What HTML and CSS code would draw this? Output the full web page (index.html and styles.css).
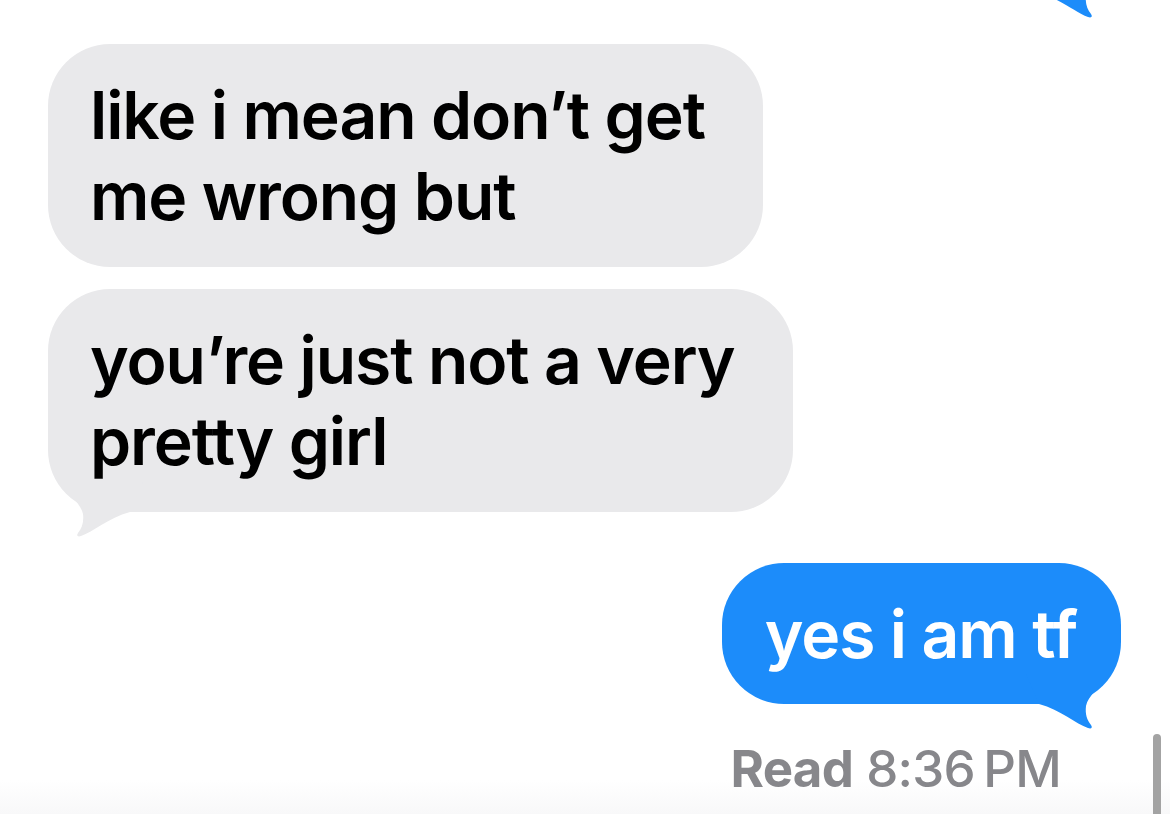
FILE: index.html
```html
<!DOCTYPE html>
<html lang="en">
<head>
  <meta charset="UTF-8" />
  <meta name="viewport" content="width=device-width, initial-scale=1.0"/>
  <title>Messages</title>
  <link rel="stylesheet" href="styles.css">
</head>
<body>
  <div class="thread">

    <!-- previous sent message, scrolled mostly out of view -->
    <div class="msg sent tail prev">
      <div class="bubble"></div>
      <svg class="tail-shape" viewBox="-100 -40 100 70" aria-hidden="true">
        <path d="M-12 -30 C-22 -16 -33 -8 -35 2 C-36 10 -34 16 -30 21 C-28 24 -30 25 -33 24 C-45 20 -60 6 -82 0 L-95 -30 Z"/>
      </svg>
    </div>

    <div class="msg received group-start">
      <div class="bubble">like i mean don’t get<br>me wrong but</div>
    </div>

    <div class="msg received tail">
      <div class="bubble">you’re just not a very<br>pretty girl</div>
      <svg class="tail-shape" viewBox="0 -40 100 70" aria-hidden="true">
        <path d="M12 -30 C22 -16 33 -8 35 2 C36 10 34 16 30 21 C28 24 30 25 33 24 C45 20 60 6 82 0 L95 -30 Z"/>
      </svg>
    </div>

    <div class="msg sent tail group-start">
      <div class="bubble">yes i am tf</div>
      <svg class="tail-shape" viewBox="-100 -40 100 70" aria-hidden="true">
        <path d="M-12 -30 C-22 -16 -33 -8 -35 2 C-36 10 -34 16 -30 21 C-28 24 -30 25 -33 24 C-45 20 -60 6 -82 0 L-95 -30 Z"/>
      </svg>
    </div>

    <div class="receipt"><b>Read</b> 8:36&#8239;PM</div>
  </div>

  <div class="scrollbar"></div>
</body>
</html>
```

FILE: styles.css
```css
body {
  margin: 0;
  height: 814px;
  overflow: hidden;
  font-family: Inter, 'Noto Sans', sans-serif;
  font-feature-settings: "liga" 0, "calt" 0;
  background: linear-gradient(to bottom, #fff 0, #fff 780px, #f8f8f9 814px);
  position: relative;
}

.thread {
  display: flex;
  flex-direction: column;
  padding: 0 49px 0 48px;
}

.msg {
  position: relative;
  display: flex;
  margin-top: 22px;
}

.msg.group-start {
  margin-top: 51px;
}

.msg.prev {
  margin-top: -148px;
}

.msg.received {
  justify-content: flex-start;
}

.msg.sent {
  justify-content: flex-end;
}

.bubble {
  font-size: 66px;
  font-weight: 600;
  line-height: 81px;
  letter-spacing: -1.1px;
  border-radius: 62px;
  padding: 31px 58px 30px 42px;
}

.received .bubble {
  background: #e9e9eb;
  color: #000;
}

.sent .bubble {
  background: #1c8cfa;
  color: #fff;
  padding: 31px 44px 29px 43px;
}

.prev .bubble {
  width: 300px;
  height: 81px;
}

/* the curled tail under the last bubble of a group */
.tail-shape {
  position: absolute;
  bottom: -30px;
  width: 100px;
  height: 70px;
}

.received .tail-shape {
  left: 0;
  fill: #e9e9eb;
}

.sent .tail-shape {
  right: 0;
  fill: #1c8cfa;
}

.receipt {
  align-self: flex-end;
  margin-top: 34px;
  margin-right: 60px;
  font-size: 51px;
  font-weight: 500;
  color: #87878b;
  letter-spacing: -0.7px;
}

.receipt b {
  font-weight: 700;
}

.scrollbar {
  position: absolute;
  right: 9px;
  top: 734px;
  bottom: 0;
  width: 8px;
  background: #a3a3a3;
  border-radius: 4px 4px 0 0;
}
```
